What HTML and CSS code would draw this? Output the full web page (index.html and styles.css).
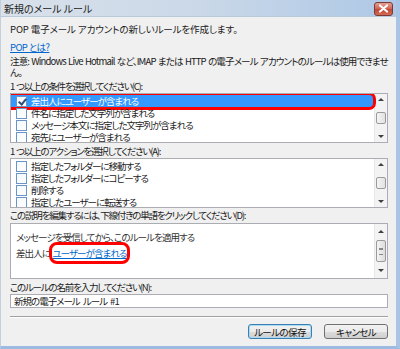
FILE: index.html
```html
<!DOCTYPE html>
<html lang="ja">
<head>
    <meta charset="UTF-8">
    <title>新規のメール ルール</title>
    <link rel="stylesheet" href="styles.css">
</head>
<body>
    <div class="window">
        <div class="titlebar">
            <span class="title">新規のメール ルール</span>
            <span class="close">
                <svg width="11" height="9" viewBox="0 0 11 9"><path d="M2 1.5 L9 7.5 M9 1.5 L2 7.5" stroke="#fff" stroke-width="2.2" stroke-linecap="round"/></svg>
            </span>
        </div>

        <div class="content">
            <p class="intro">POP 電子メール アカウントの新しいルールを作成します。</p>
            <p class="help"><a href="#">POP とは?</a></p>
            <p class="note">注意: Windows Live Hotmail など、IMAP または HTTP の電子メール アカウントのルールは使用できませ<br>ん。</p>

            <p class="label">1 つ以上の条件を選択してください(C):</p>
            <div class="listbox">
                <ul class="items">
                    <li class="item selected marked"><span class="check checked"></span>差出人にユーザーが含まれる</li>
                    <li class="item"><span class="check"></span>件名に指定した文字列が含まれる</li>
                    <li class="item"><span class="check"></span>メッセージ本文に指定した文字列が含まれる</li>
                    <li class="item"><span class="check"></span>宛先にユーザーが含まれる</li>
                </ul>
                <div class="scrollbar">
                    <span class="arrow up"></span>
                    <span class="thumb"></span>
                    <span class="arrow down"></span>
                </div>
            </div>

            <p class="label">1 つ以上のアクションを選択してください(A):</p>
            <div class="listbox">
                <ul class="items">
                    <li class="item"><span class="check"></span>指定したフォルダーに移動する</li>
                    <li class="item"><span class="check"></span>指定したフォルダーにコピーする</li>
                    <li class="item"><span class="check"></span>削除する</li>
                    <li class="item"><span class="check"></span>指定したユーザーに転送する</li>
                </ul>
                <div class="scrollbar">
                    <span class="arrow up"></span>
                    <span class="thumb"></span>
                    <span class="arrow down"></span>
                </div>
            </div>

            <p class="label snug">この説明を編集するには、下線付きの単語をクリックしてください(D):</p>
            <div class="desc">
                <div class="desc-text">
                    <p>メッセージを受信してから、このルールを適用する</p>
                    <p>差出人に <a href="#" class="marked-link">ユーザーが含まれる</a></p>
                </div>
                <div class="scrollbar tall">
                    <span class="arrow up"></span>
                    <span class="thumb grip"></span>
                    <span class="arrow down"></span>
                </div>
            </div>

            <p class="label">このルールの名前を入力してください(N):</p>
            <div class="namebox">新規の電子メール ルール #1</div>

            <div class="separator"></div>

            <div class="buttons">
                <button class="default">ルールの保存</button>
                <button>キャンセル</button>
            </div>
        </div>
    </div>
</body>
</html>
```

FILE: styles.css
```css
* {
    margin: 0;
    padding: 0;
    box-sizing: border-box;
}

body {
    font-family: "Noto Sans CJK JP", "Noto Sans", sans-serif;
    font-size: 9.5px;
    font-feature-settings: "palt";
    color: #1a1a1a;
    background: #f0f0f0;
}

.window {
    width: 400px;
    height: 349px;
    background: #f0f0f0;
    border-left: 1px solid #c4cfdc;
    border-right: 4px solid #a9c4e4;
    border-bottom: 3px solid #9dbbe0;
    display: flex;
    flex-direction: column;
}

/* Title bar */
.titlebar {
    height: 17px;
    display: flex;
    align-items: center;
    justify-content: space-between;
    padding: 0 3px 0 3px;
    background: linear-gradient(to right, #d9e1ea 0%, #cad8e8 50%, #aec8e6 100%);
    border-bottom: 1px solid #b9c9db;
}

.title {
    font-size: 10px;
    color: #222;
}

.close {
    width: 19px;
    height: 14px;
    margin-top: 1px;
    border: 1px solid #7a3a36;
    border-radius: 3px;
    background: linear-gradient(to bottom, #e7a094 0%, #d0604f 50%, #c04733 51%, #d46a52 100%);
    display: flex;
    align-items: center;
    justify-content: center;
}

/* Body */
.content {
    padding: 0 8px 0 9px;
    display: flex;
    flex-direction: column;
}

p {
    white-space: nowrap;
}

.intro {
    height: 12px;
    line-height: 12px;
    margin-top: 6px;
    letter-spacing: -0.1px;
}

.help {
    height: 12px;
    line-height: 12px;
    margin-top: 6px;
    letter-spacing: -0.6px;
}

a {
    color: #0066cc;
}

.note {
    height: 22px;
    line-height: 11px;
    margin-top: 3px;
    letter-spacing: -0.85px;
    word-spacing: 1px;
}

.label {
    height: 12px;
    line-height: 12px;
    margin-top: 2px;
    letter-spacing: -1.2px;
    word-spacing: 1px;
}

.label.snug {
    margin-top: 1px;
}

/* List boxes */
.listbox {
    height: 50px;
    margin-top: 1px;
    border: 1px solid #abadb3;
    background: #fff;
    display: flex;
    overflow: hidden;
}

.items {
    list-style: none;
    flex: 1;
    padding-top: 1px;
}

.item {
    height: 12px;
    line-height: 12px;
    letter-spacing: -1px;
    display: flex;
    align-items: center;
    padding-left: 5px;
    position: relative;
    white-space: nowrap;
}

.item.selected {
    background: #3399ff;
    color: #fff;
}

.item.marked::after {
    content: "";
    position: absolute;
    left: -6px;
    right: -2px;
    top: -3px;
    bottom: -3px;
    border: 3px solid #ff0000;
    border-radius: 7px;
}

.check {
    width: 11px;
    height: 11px;
    margin-right: 4px;
    border: 1px solid #6b95c4;
    background: linear-gradient(135deg, #f4f8fc, #ffffff);
    flex-shrink: 0;
    position: relative;
}

.check.checked::after {
    content: "";
    position: absolute;
    left: 3px;
    top: 0;
    width: 3px;
    height: 6px;
    border-right: 2px solid #2a4f7a;
    border-bottom: 2px solid #2a4f7a;
    transform: rotate(40deg);
}

/* Scrollbars */
.scrollbar {
    width: 13px;
    background: #f3f3f3;
    border-left: 1px solid #e8e8e8;
    display: flex;
    flex-direction: column;
    align-items: center;
    justify-content: space-between;
    padding: 4px 0 4px;
}

.arrow {
    width: 0;
    height: 0;
    border-left: 3px solid transparent;
    border-right: 3px solid transparent;
}

.arrow.up {
    border-bottom: 3px solid #404040;
}

.arrow.down {
    border-top: 3px solid #404040;
}

.thumb {
    width: 10px;
    height: 12px;
    border: 1px solid #9b9b9b;
    border-radius: 2px;
    background: linear-gradient(to right, #f4f4f4, #e2e2e2);
}

.thumb.grip {
    height: 22px;
    display: flex;
    align-items: center;
    justify-content: center;
    background: linear-gradient(to right, #f4f4f4, #dcdcdc);
}

.thumb.grip::after {
    content: "";
    width: 4px;
    height: 5px;
    border-top: 1px solid #888;
    border-bottom: 1px solid #888;
    box-shadow: inset 0 2px 0 -1px #888;
}

/* Description box */
.desc {
    height: 56px;
    margin-top: 2px;
    border: 1px solid #abadb3;
    background: #fff;
    display: flex;
}

.desc-text {
    flex: 1;
    padding: 7px 0 0 5px;
    color: #333;
    letter-spacing: -0.9px;
    word-spacing: 1px;
}

.desc-text p {
    height: 12px;
    line-height: 12px;
    margin-bottom: 4px;
}

.marked-link {
    position: relative;
}

.marked-link::after {
    content: "";
    position: absolute;
    left: -3px;
    right: -3px;
    top: -4px;
    bottom: -4px;
    border: 3px solid #ff0000;
    border-radius: 8px;
}

.scrollbar.tall {
    padding: 6px 0 6px;
}

/* Name input */
.namebox {
    height: 14px;
    margin-top: 1px;
    border: 1px solid #abadb3;
    background: #fff;
    line-height: 12px;
    padding-left: 3px;
    letter-spacing: -1px;
    word-spacing: 2px;
}

.separator {
    height: 2px;
    margin-top: 8px;
    border-top: 1px solid #a0a0a0;
    border-bottom: 1px solid #fff;
}

.buttons {
    display: flex;
    justify-content: flex-end;
    gap: 12px;
    margin-top: 6px;
}

button {
    font-family: inherit;
    font-size: 9.5px;
    font-feature-settings: "palt";
    letter-spacing: -0.6px;
    width: 64px;
    height: 15px;
    line-height: 12px;
    border: 1px solid #707070;
    border-radius: 3px;
    background: linear-gradient(to bottom, #f2f2f2 0%, #ebebeb 50%, #dddddd 51%, #cfcfcf 100%);
    color: #111;
}

button.default {
    border-color: #3c7fb1;
    box-shadow: inset 0 0 0 1px #a8d9f5;
}
```
